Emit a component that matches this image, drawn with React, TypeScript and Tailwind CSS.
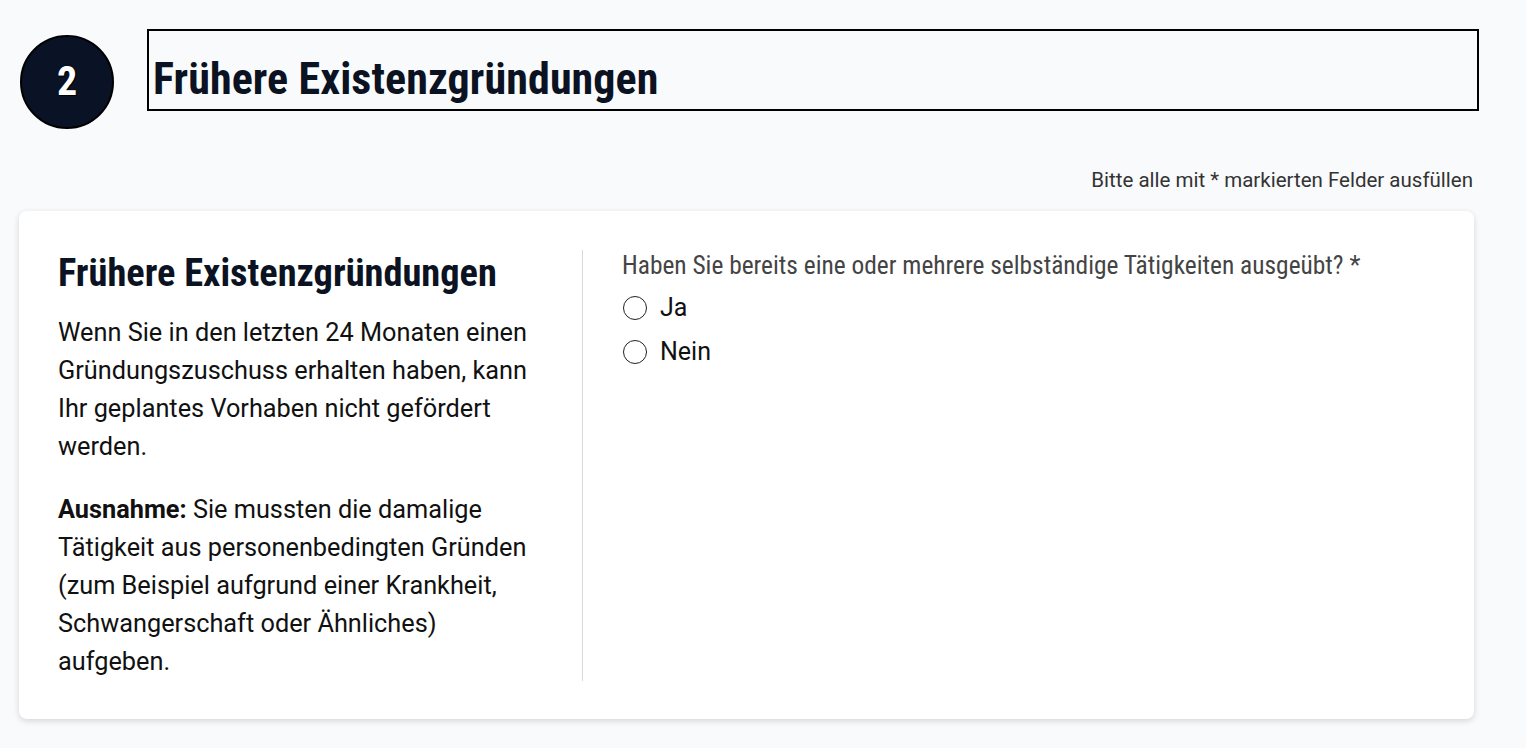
export default function App() {
  return (
    <div className="min-h-screen bg-[#f9fafc] font-['Roboto',sans-serif] text-[#0b1222]">
      <div className="flex items-start pl-[20px] pr-[47px] pt-[29px]">
        <div className="mt-[6px] flex h-[94px] w-[94px] shrink-0 items-center justify-center rounded-full border-2 border-black bg-[#0a1326]">
          <span className="font-['Roboto_Condensed',sans-serif] text-[40px] font-bold text-white [text-shadow:0_0_2px_#000,1px_1px_0_#000]">
            2
          </span>
        </div>
        <div className="ml-[33px] flex h-[82px] flex-1 items-end border-2 border-black px-[4px] pb-[8px]">
          <h1 className="font-['Roboto_Condensed',sans-serif] text-[44px] font-bold leading-none tracking-[0.1px]">
            Frühere Existenzgründungen
          </h1>
        </div>
      </div>

      <p className="mt-[39px] pr-[53px] text-right text-[20.5px] leading-[24px] text-[#333]">
        Bitte alle mit * markierten Felder ausfüllen
      </p>

      <div className="ml-[19px] mr-[52px] mt-[19px] flex rounded-lg bg-white pt-[39px] pb-[38px] shadow-[0_2px_6px_rgba(0,0,0,0.15)]">
        <div className="w-[564px] shrink-0 border-r border-[#d7d9de] pl-[39px] pr-[40px]">
          <h2 className="font-['Roboto_Condensed',sans-serif] text-[38.4px] font-bold leading-[46px]">
            Frühere Existenzgründungen
          </h2>
          <p className="mt-[18px] text-[25.3px] leading-[38px] text-[#111]">
            Wenn Sie in den letzten 24 Monaten einen Gründungszuschuss erhalten haben, kann Ihr geplantes Vorhaben nicht gefördert werden.
          </p>
          <p className="mt-[25px] text-[25.3px] leading-[38px] text-[#111]">
            <strong className="font-bold">Ausnahme:</strong> Sie mussten die damalige Tätigkeit aus personenbedingten Gründen (zum Beispiel aufgrund einer Krankheit, Schwangerschaft oder Ähnliches) aufgeben.
          </p>
        </div>
        <div className="flex-1 pl-[39px]">
          <p className="font-['Roboto_Condensed',sans-serif] text-[25.4px] leading-[30px] text-[#444]">
            Haben Sie bereits eine oder mehrere selbständige Tätigkeiten ausgeübt? *
          </p>
          <div className="mt-[13px] flex flex-col gap-[14px]">
            {['Ja', 'Nein'].map((label) => (
              <label key={label} className="flex items-center gap-[13px]">
                <span className="ml-px h-[24px] w-[24px] rounded-full border-[1.5px] border-[#222] bg-white" />
                <span className="text-[25px] leading-[30px] text-[#111]">{label}</span>
              </label>
            ))}
          </div>
        </div>
      </div>
    </div>
  );
}
